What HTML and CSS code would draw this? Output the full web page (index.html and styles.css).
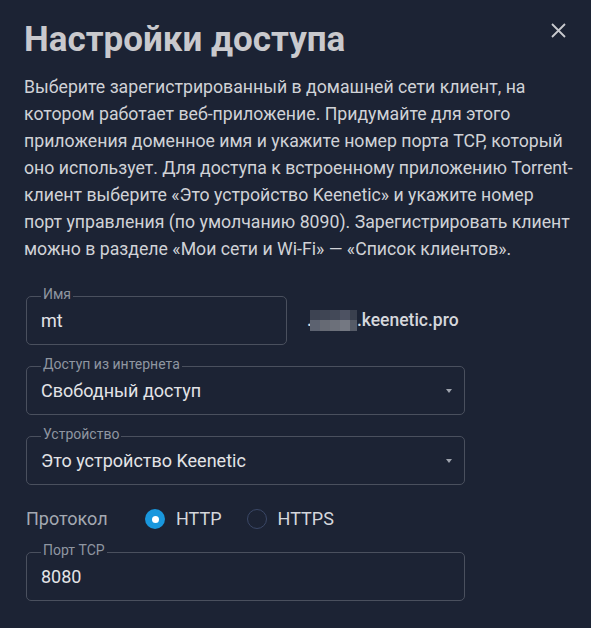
FILE: index.html
```html
<!DOCTYPE html>
<html lang="ru">
<head>
<meta charset="utf-8">
<title>Настройки доступа</title>
<link rel="stylesheet" href="styles.css">
</head>
<body>
<div class="dialog">
  <header class="dialog-header">
    <h1 class="title">Настройки доступа</h1>
    <button class="close" type="button" aria-label="Закрыть">
      <svg width="15" height="15" viewBox="0 0 15 15"><path d="M1 1L14 14M14 1L1 14" stroke="#c9cacf" stroke-width="1.8" fill="none"/></svg>
    </button>
  </header>
  <p class="intro">Выберите зарегистрированный в домашней сети клиент, на<br>котором работает веб-приложение. Придумайте для этого<br>приложения доменное имя и укажите номер порта TCP, который<br>оно использует. Для доступа к встроенному приложению Torrent-<br>клиент выберите «Это устройство Keenetic» и укажите номер<br>порт управления (по умолчанию 8090). Зарегистрировать клиент<br>можно в разделе «Мои сети и Wi-Fi» — «Список клиентов».</p>
  <div class="form">
    <div class="name-row">
      <fieldset class="field field-name">
        <legend>Имя</legend>
        <div class="control"><span class="value">mt</span></div>
      </fieldset>
      <div class="domain"><span>.</span><span class="mosaic"><i class="c1"></i><i class="c2"></i><i class="c3"></i><i class="c4"></i><i class="c5"></i><i class="c6"></i><i class="c7"></i><i class="c8"></i><i class="c9"></i><i class="c10"></i></span><span>.keenetic.pro</span></div>
    </div>
    <fieldset class="field">
      <legend>Доступ из интернета</legend>
      <div class="control"><span class="value">Свободный доступ</span><span class="caret"></span></div>
    </fieldset>
    <fieldset class="field">
      <legend>Устройство</legend>
      <div class="control"><span class="value">Это устройство Keenetic</span><span class="caret"></span></div>
    </fieldset>
    <div class="protocol">
      <span class="proto-label">Протокол</span>
      <span class="option"><span class="radio checked"></span><span class="opt-text">HTTP</span></span>
      <span class="option"><span class="radio"></span><span class="opt-text">HTTPS</span></span>
    </div>
    <fieldset class="field">
      <legend>Порт TCP</legend>
      <div class="control"><span class="value">8080</span></div>
    </fieldset>
  </div>
</div>
</body>
</html>
```

FILE: styles.css
```css
* { box-sizing: border-box; }
html, body {
  margin: 0;
  padding: 0;
  background: #1c2334;
  height: 100%;
}
body {
  font-family: Roboto, "Noto Sans", "Liberation Sans", sans-serif;
  color: #d0d2d7;
  overflow: hidden;
}
.dialog {
  padding: 20px 20px 0 24px;
}
.dialog-header {
  display: flex;
  justify-content: space-between;
  align-items: flex-start;
  margin-right: 5px;
}
.title {
  margin: 0;
  font-size: 35px;
  line-height: 40px;
  font-weight: 700;
  color: #c9c9cd;
}
.close {
  margin-top: 3px;
  padding: 0;
  border: 0;
  background: none;
  width: 15px;
  height: 15px;
  display: block;
  cursor: pointer;
}
.close svg { display: block; }
.intro {
  margin: 14px 0 0 0;
  font-size: 17.7px;
  line-height: 27px;
  white-space: nowrap;
  color: #d0d2d7;
}
.form {
  margin-top: 23px;
  padding-left: 2px;
  display: flex;
  flex-direction: column;
  gap: 11px;
  width: 441px;
}
.name-row {
  display: flex;
  align-items: flex-start;
  width: 480px;
}
.field {
  margin: 0;
  padding: 0 12px 0 14px;
  border: 1px solid #4a505e;
  border-radius: 5px;
  min-width: 0;
}
.field-name {
  width: 261px;
  flex: none;
}
.field legend {
  padding: 0 2px 5px 2px;
  font-size: 14px;
  line-height: 16px;
  color: #8f96a1;
}
.control {
  display: flex;
  align-items: center;
  padding: 2px 0 11px 0;
  height: 37px;
}
.value {
  flex: 1;
  font-size: 18px;
  line-height: 24px;
  color: #e3e4e7;
}
.caret {
  width: 0;
  height: 0;
  border-left: 3.5px solid transparent;
  border-right: 3.5px solid transparent;
  border-top: 4px solid #9ea3ad;
  margin-top: -1px;
}
.domain {
  margin: 23px 0 0 20px;
  display: flex;
  align-items: center;
  font-size: 17.5px;
  line-height: 22px;
  font-weight: 500;
  color: #d5d7dc;
}
.mosaic {
  display: grid;
  grid-template-columns: 10px 10px 10px 10px 7px;
  grid-template-rows: 10px 11px;
  margin-left: -2px;
}
.mosaic i { display: block; }
.c1 { background: #3d4352; }
.c2 { background: #3f4554; }
.c3 { background: #434958; }
.c4 { background: #4d5262; }
.c5 { background: #3a404e; }
.c6 { background: #5c6270; }
.c7 { background: #666a74; }
.c8 { background: #6c707a; }
.c9 { background: #747882; }
.c10 { background: #565b67; }
.protocol {
  margin-top: 11px;
  display: flex;
  align-items: center;
  height: 24px;
  font-size: 18px;
  line-height: 24px;
}
.proto-label {
  width: 119px;
  color: #a4a9b2;
}
.option {
  display: flex;
  align-items: center;
  gap: 11px;
  margin-right: 25px;
}
.opt-text { color: #d5d7dc; }
.radio {
  width: 20px;
  height: 20px;
  border-radius: 50%;
  border: 1.5px solid #3a4766;
  position: relative;
  flex: none;
}
.radio.checked {
  border: 0;
  background: #1997dd;
}
.radio.checked::after {
  content: "";
  position: absolute;
  left: 6.5px;
  top: 6.5px;
  width: 7px;
  height: 7px;
  border-radius: 50%;
  background: #ffffff;
}
```
